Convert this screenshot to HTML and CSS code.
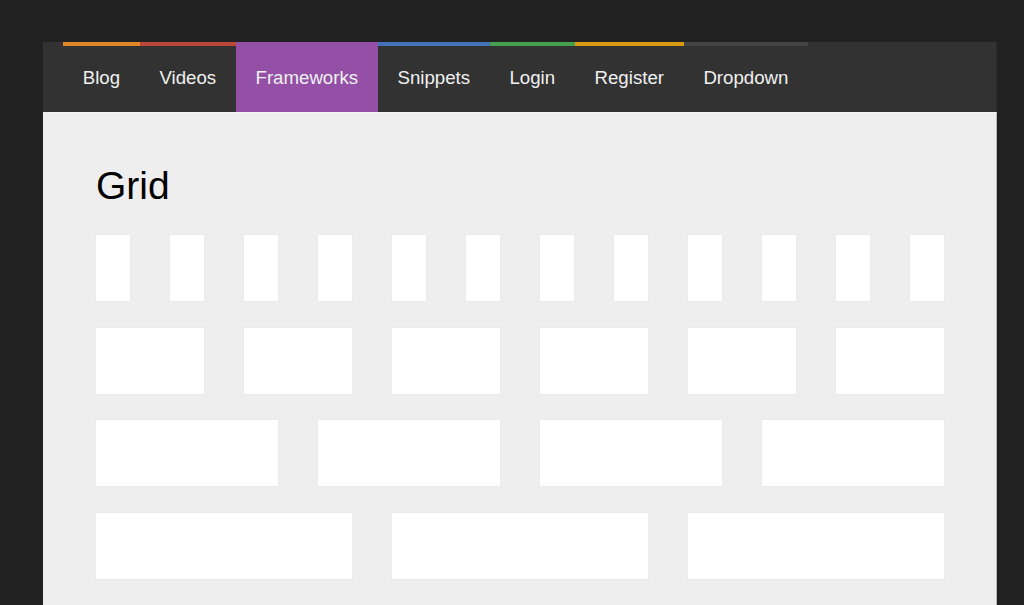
FILE: index.html
```html
<!DOCTYPE html>
<html>
<head>
<meta charset="utf-8">
<link rel="stylesheet" href="styles.css">
</head>
<body>
<div class="page">
  <nav class="nav">
    <a class="nav-item c-orange">Blog</a>
    <a class="nav-item c-red">Videos</a>
    <a class="nav-item c-purple active">Frameworks</a>
    <a class="nav-item c-blue">Snippets</a>
    <a class="nav-item c-green">Login</a>
    <a class="nav-item c-gold">Register</a>
    <a class="nav-item c-gray">Dropdown</a>
  </nav>
  <main class="content">
    <h1 class="title">Grid</h1>
    <div class="grid">
      <div class="cell s1"></div><div class="cell s1"></div><div class="cell s1"></div><div class="cell s1"></div>
      <div class="cell s1"></div><div class="cell s1"></div><div class="cell s1"></div><div class="cell s1"></div>
      <div class="cell s1"></div><div class="cell s1"></div><div class="cell s1"></div><div class="cell s1"></div>
      <div class="cell s2"></div><div class="cell s2"></div><div class="cell s2"></div>
      <div class="cell s2"></div><div class="cell s2"></div><div class="cell s2"></div>
      <div class="cell s3"></div><div class="cell s3"></div><div class="cell s3"></div><div class="cell s3"></div>
      <div class="cell s4"></div><div class="cell s4"></div><div class="cell s4"></div>
      <div class="cell s6"></div><div class="cell s6"></div>
      <div class="cell s12"></div>
    </div>
  </main>
</div>
</body>
</html>
```

FILE: styles.css
```css
html, body {
  margin: 0;
  padding: 0;
  background: #212121;
  overflow: hidden;
}
body {
  font-family: "Liberation Sans", Arial, sans-serif;
}
.page {
  width: 954px;
  margin: 42px 0 0 43px;
  box-sizing: border-box;
}
.nav {
  display: flex;
  height: 70px;
  padding-left: 20px;
  background: #323232;
  border-right: 1px solid #2a2a2a;
  box-sizing: border-box;
}
.nav-item {
  display: flex;
  align-items: center;
  padding: 0 19.7px 2px 19.7px;
  border-top: 4px solid #444;
  color: #f0f0f0;
  font-size: 18.67px;
  text-decoration: none;
  box-sizing: border-box;
}
.c-orange { border-top-color: #e2862a; }
.c-red { border-top-color: #bb4739; }
.c-purple { border-top-color: #9350a6; }
.c-blue { border-top-color: #4571b8; }
.c-green { border-top-color: #45a14e; }
.c-gold { border-top-color: #d99b14; }
.c-gray { border-top-color: #444444; }
.nav-item.active {
  background: #9350a6;
}
.content {
  background: #eeeeee;
  border-right: 1px solid #b8b8b8;
  border-top: 1px solid #f4f4f4;
  padding: 47px 53px 40px 53px;
  min-height: 600px;
}
.title {
  margin: 0 0 23px 0;
  font-weight: normal;
  font-size: 39px;
  line-height: 52px;
  color: #000;
}
.grid {
  display: grid;
  grid-template-columns: repeat(12, 34px);
  column-gap: 40px;
  row-gap: 26.7px;
}
.cell {
  height: 66px;
  background: #ffffff;
  box-shadow: 0 0 1px rgba(0,0,0,0.08);
}
.s1 { grid-column: span 1; }
.s2 { grid-column: span 2; }
.s3 { grid-column: span 3; }
.s4 { grid-column: span 4; }
.s6 { grid-column: span 6; }
.s12 { grid-column: span 12; }
```
